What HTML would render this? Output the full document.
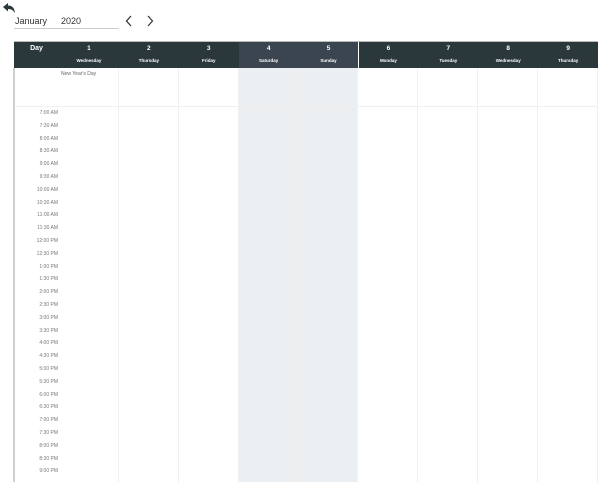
<!DOCTYPE html><html><head><style>
body{margin:0;width:600px;height:482px;background:#fff;font-family:"Liberation Sans",sans-serif;position:relative;overflow:hidden}
.a{position:absolute}
.hd{background:#2b383b;color:#fff;font-weight:bold;text-align:center}
.we{background:#3b4550}
.col{position:absolute;top:68px;bottom:0;border-right:1px solid #f0f0f0}
.t{position:absolute;right:542px;font-size:5px;color:#777;text-align:right}
</style></head><body>
<svg class="a" style="left:2px;top:2px" width="14" height="12" viewBox="0 0 14 12"><path d="M1 5 L6 1 L6 3.5 C10 3.5 12.5 6 13 11 C11 8 9 7 6 7 L6 9.5 Z" fill="#2b383b"/></svg>
<div class="a" style="left:15px;top:16px;font-size:9px;color:#333">January</div>
<div class="a" style="left:61px;top:16px;font-size:9px;color:#333">2020</div>
<div class="a" style="left:14px;top:28px;width:105px;height:1px;background:#ccc"></div>
<svg class="a" style="left:125px;top:15px" width="30" height="12" viewBox="0 0 30 12"><path d="M6 1 L1.5 6 L6 11 M23 1 L27.5 6 L23 11" fill="none" stroke="#333" stroke-width="1.2"/></svg>
<div class="a" style="left:14px;top:41px;width:584px;height:1px;background:#bbb"></div>
<div class="a hd" style="left:14px;top:42px;width:45px;height:26px;font-size:7px;line-height:14px">Day</div>
<div id="cols"></div>
<div class="a" style="left:13px;top:68px;width:2px;bottom:0;background:#ccd0d3"></div>
<div class="a" style="left:15px;top:106px;width:583px;height:1px;background:#f0f0f0"></div>
<div class="a" style="left:61px;top:71px;font-size:5px;color:#666">New Year's Day</div>
<script>
var n=[1,2,3,4,5,6,7,8,9],d=["Wednesday","Thursday","Friday","Saturday","Sunday","Monday","Tuesday","Wednesday","Thursday"],h="";
for(var i=0;i<9;i++){var x=59+i*59.9,w=59.9,we=(i==3||i==4);
h+='<div class="a hd'+(we?' we':'')+'" style="left:'+x+'px;top:42px;width:'+w+'px;height:26px"><div style="font-size:6.5px;line-height:14px">'+n[i]+'</div><div style="font-size:4.5px;line-height:10px">'+d[i]+'</div></div>';
h+='<div class="col" style="left:'+x+'px;width:'+(w-1)+'px;'+(we?'background:#eceff2;':'')+'"></div>';}
var ts=[];for(var k=7;k<=21;k++){var hh=k>12?k-12:k,ap=k>=12?"PM":"AM";ts.push(hh+":00 "+ap);if(k<21)ts.push(hh+":30 "+ap);}
for(var j=0;j<ts.length;j++)h+='<div class="t" style="top:'+(110+j*12.8)+'px">'+ts[j]+'</div>';
document.getElementById("cols").outerHTML=h;
</script>
</body></html>
